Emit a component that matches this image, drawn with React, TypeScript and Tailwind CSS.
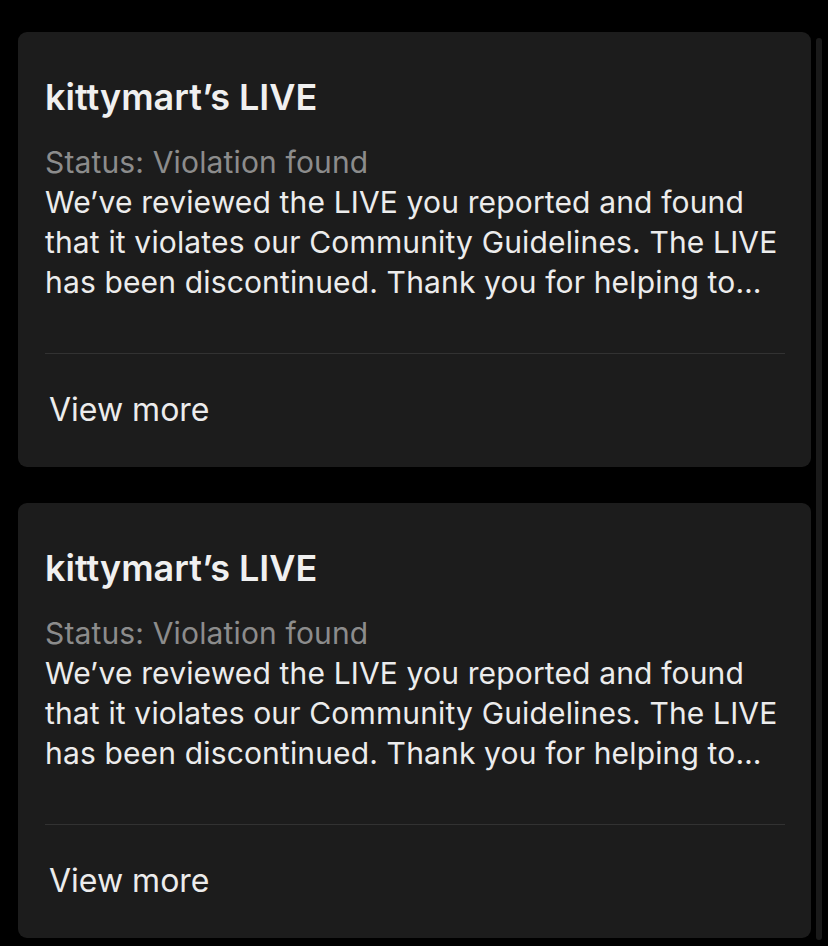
import React from "react";

const reports = [
  {
    title: "kittymart\u2019s LIVE",
    status: "Status: Violation found",
    lines: [
      "We\u2019ve reviewed the LIVE you reported and found",
      "that it violates our Community Guidelines. The LIVE",
      "has been discontinued. Thank you for helping to\u2026",
    ],
  },
  {
    title: "kittymart\u2019s LIVE",
    status: "Status: Violation found",
    lines: [
      "We\u2019ve reviewed the LIVE you reported and found",
      "that it violates our Community Guidelines. The LIVE",
      "has been discontinued. Thank you for helping to\u2026",
    ],
  },
];

function ReportCard({ title, status, lines }: { title: string; status: string; lines: string[] }) {
  return (
    <div className="bg-[#1c1c1c] rounded-[9px] h-[435px] flex flex-col pl-[27px] pr-[26px] font-['Inter',sans-serif]">
      <div className="pt-[43px] text-[36px] leading-[44px] text-[#f0f0f0] font-semibold">
        {title}
      </div>
      <div className="mt-[23px] text-[30px] leading-[40px] tracking-[0.15px] whitespace-nowrap">
        <div className="text-[#8c8c8c]">{status}</div>
        {lines.map((l, i) => (
          <div key={i} className="text-[#ececec]">
            {l}
          </div>
        ))}
      </div>
      <div className="mt-auto border-t border-[#323232] h-[114px] flex items-center pl-[4px] pb-[1px]">
        <span className="text-[32px] text-[#ececec]">View more</span>
      </div>
    </div>
  );
}

export default function App() {
  return (
    <div className="w-[828px] h-[946px] bg-black flex overflow-hidden">
      <div className="ml-[18px] mt-[32px] w-[793px] flex flex-col gap-[36px]">
        {reports.map((r, i) => (
          <ReportCard key={i} {...r} />
        ))}
      </div>
      <div className="ml-[5px] mt-[38px] mb-[6px] w-[6px] rounded-full bg-[#1a1a1a]" />
    </div>
  );
}
